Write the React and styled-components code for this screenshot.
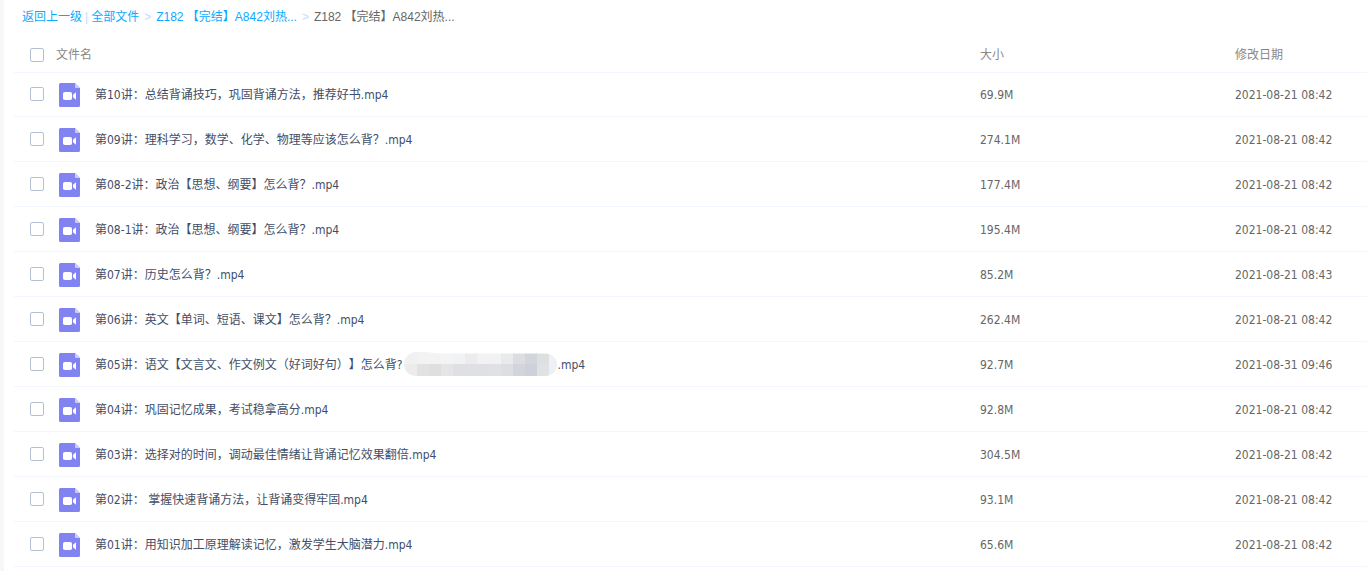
import React, { useState } from "react";
import styled, { createGlobalStyle } from "styled-components";

const GlobalStyle = createGlobalStyle`
  * {
    box-sizing: border-box;
  }
  body {
    margin: 0;
    background: #ffffff;
    font-family: "DejaVu Sans Condensed", "Noto Sans CJK SC", sans-serif;
    font-size: 12px;
    color: #424e67;
    text-spacing-trim: space-all;
  }
`;

const Page = styled.main`
  min-height: 100vh;
  border-left: 4px solid #f7f7f7;
  padding-left: 10px;
  overflow: hidden;
`;

const Breadcrumb = styled.nav`
  display: flex;
  align-items: center;
  gap: 3px;
  height: 36px;
  padding: 0 8px 3px;
  font-family: "Liberation Sans", "Noto Sans CJK SC", sans-serif;
  line-height: 18px;
  white-space: pre;
`;

const CrumbLink = styled.a`
  color: #09aaff;
  text-decoration: none;
`;

const Divider = styled.span`
  color: #c4dbfe;
`;

const Arrow = styled(Divider)`
  margin: 0 2px;
`;

const Current = styled.span`
  color: #666666;
`;

const Table = styled.table`
  width: 100%;
  table-layout: fixed;
  border-collapse: separate;
  border-spacing: 0;
  line-height: 18px;
`;

const HeadCell = styled.th`
  width: ${(props) => props.$width || "auto"};
  height: 37px;
  padding: 2px 0 0;
  border-bottom: 1px solid #f2f6fd;
  color: #888888;
  font-weight: normal;
  text-align: left;
`;

const Cell = styled.td`
  height: 45px;
  padding: 2px 0 0;
  border-bottom: 1px solid #f2f6fd;
  color: #666666;
  white-space: nowrap;
`;

const Row = styled.tr`
  &:first-child td {
    height: 44px;
    padding-top: 0;
  }
`;

const NameBox = styled.div`
  display: flex;
  align-items: center;
  padding-left: 16px;
`;

const Check = styled.input`
  appearance: none;
  flex: none;
  width: 14px;
  height: 14px;
  margin: 0;
  border: 1px solid #b4c1d4;
  border-radius: 2px;
  background: #ffffff;

  td & {
    margin-bottom: 2px;
  }

  &:checked {
    background: #09aaff;
    border-color: #09aaff;
  }
`;

const HeadLabel = styled.label`
  margin-left: 12px;
`;

const FileIcon = styled.svg`
  flex: none;
  width: 21px;
  height: 24px;
  margin: 0 15px;
`;

const FileLink = styled.a`
  display: flex;
  align-items: center;
  color: #424e67;
  text-decoration: none;
  white-space: pre;
`;

const Mosaic = styled.svg`
  width: 153px;
  height: 24px;
  margin: 0 0 2px 2px;
`;

const files = [
  { name: "第10讲：总结背诵技巧，巩固背诵方法，推荐好书.mp4", size: "69.9M", date: "2021-08-21 08:42" },
  { name: "第09讲：理科学习，数学、化学、物理等应该怎么背？.mp4", size: "274.1M", date: "2021-08-21 08:42" },
  { name: "第08-2讲：政治【思想、纲要】怎么背？.mp4", size: "177.4M", date: "2021-08-21 08:42" },
  { name: "第08-1讲：政治【思想、纲要】怎么背？.mp4", size: "195.4M", date: "2021-08-21 08:42" },
  { name: "第07讲：历史怎么背？.mp4", size: "85.2M", date: "2021-08-21 08:43" },
  { name: "第06讲：英文【单词、短语、课文】怎么背？.mp4", size: "262.4M", date: "2021-08-21 08:42" },
  {
    name: "第05讲：语文【文言文、作文例文（好词好句）】怎么背?",
    masked: true,
    ext: ".mp4",
    size: "92.7M",
    date: "2021-08-31 09:46",
  },
  { name: "第04讲：巩固记忆成果，考试稳拿高分.mp4", size: "92.8M", date: "2021-08-21 08:42" },
  { name: "第03讲：选择对的时间，调动最佳情绪让背诵记忆效果翻倍.mp4", size: "304.5M", date: "2021-08-21 08:42" },
  { name: "第02讲： 掌握快速背诵方法，让背诵变得牢固.mp4", size: "93.1M", date: "2021-08-21 08:42" },
  { name: "第01讲：用知识加工原理解读记忆，激发学生大脑潜力.mp4", size: "65.6M", date: "2021-08-21 08:42" },
];

const topTones = ["#f1f1f2", "#f3f3f4", "#f3f3f4", "#f3f4f4", "#f1f2f3", "#ececee", "#f2f2f3", "#f2f2f3", "#e9eaec", "#dcdde2", "#d3d5dd", "#dedfe1", "#edf1f5"];
const bottomTones = ["#ececed", "#e2e2e4", "#dfdfe0", "#e5e5e7", "#dfe0e3", "#dfe0e3", "#dfe0e3", "#e0e1e4", "#dddee2", "#d3d5dc", "#ced1da", "#e0e1e3", "#edf1f5"];

const VideoIcon = () => (
  <FileIcon viewBox="0 0 21 24" aria-hidden="true">
    <path d="M1.5 0H16l5 5v17.5a1.5 1.5 0 0 1-1.5 1.5h-18A1.5 1.5 0 0 1 0 22.5v-21A1.5 1.5 0 0 1 1.5 0z" fill="#8183f1" />
    <path d="M16 0l5 5h-4a1 1 0 0 1-1-1z" fill="#cdcdfa" />
    <rect x="4" y="9" width="9" height="8" rx="1.8" fill="#ffffff" />
    <path d="M17 9.3v7.4l-3-2.4v-2.6z" fill="#ffffff" />
  </FileIcon>
);

const MaskedText = () => (
  <Mosaic viewBox="0 0 153 24" aria-hidden="true">
    <clipPath id="mask-shape">
      <path d="M12 0h8l16 1.5h105a12 11 0 0 1 0 22.5H12a12 12 0 0 1 0-24z" />
    </clipPath>
    <g clipPath="url(#mask-shape)" shapeRendering="crispEdges">
      {topTones.map((tone, i) => (
        <rect key={i} x={i * 12 + (i ? 1 : 0)} y="0" width="13" height="12" fill={tone} />
      ))}
      {bottomTones.map((tone, i) => (
        <rect key={i} x={i * 12 + (i ? 1 : 0)} y="12" width="13" height="12" fill={tone} />
      ))}
    </g>
  </Mosaic>
);

function App() {
  const [checked, setChecked] = useState([]);

  const toggle = (index) => {
    setChecked(
      checked.includes(index)
        ? checked.filter((i) => i !== index)
        : [...checked, index]
    );
  };

  const toggleAll = () => {
    setChecked(checked.length === files.length ? [] : files.map((_, i) => i));
  };

  return (
    <>
      <GlobalStyle />
      <Page>
        <Breadcrumb>
          <CrumbLink href="#back">返回上一级</CrumbLink>
          <Divider>|</Divider>
          <CrumbLink href="#all">全部文件</CrumbLink>
          <Arrow>&gt;</Arrow>
          <CrumbLink href="#parent">Z182 【完结】A842刘热...</CrumbLink>
          <Arrow>&gt;</Arrow>
          <Current>Z182 【完结】A842刘热...</Current>
        </Breadcrumb>

        <Table>
          <thead>
            <tr>
              <HeadCell>
                <NameBox>
                  <Check
                    id="check-all"
                    type="checkbox"
                    checked={checked.length === files.length}
                    onChange={toggleAll}
                  />
                  <HeadLabel htmlFor="check-all">文件名</HeadLabel>
                </NameBox>
              </HeadCell>
              <HeadCell $width="255px">大小</HeadCell>
              <HeadCell $width="132px">修改日期</HeadCell>
            </tr>
          </thead>
          <tbody>
            {files.map((file, index) => (
              <Row key={file.name}>
                <Cell>
                  <NameBox>
                    <Check
                      type="checkbox"
                      aria-labelledby={`file-${index}`}
                      checked={checked.includes(index)}
                      onChange={() => toggle(index)}
                    />
                    <VideoIcon />
                    <FileLink id={`file-${index}`} href={`#file-${index}`}>
                      {file.name}
                      {file.masked && <MaskedText />}
                      {file.ext}
                    </FileLink>
                  </NameBox>
                </Cell>
                <Cell>{file.size}</Cell>
                <Cell>{file.date}</Cell>
              </Row>
            ))}
          </tbody>
        </Table>
      </Page>
    </>
  );
}

export default App;
